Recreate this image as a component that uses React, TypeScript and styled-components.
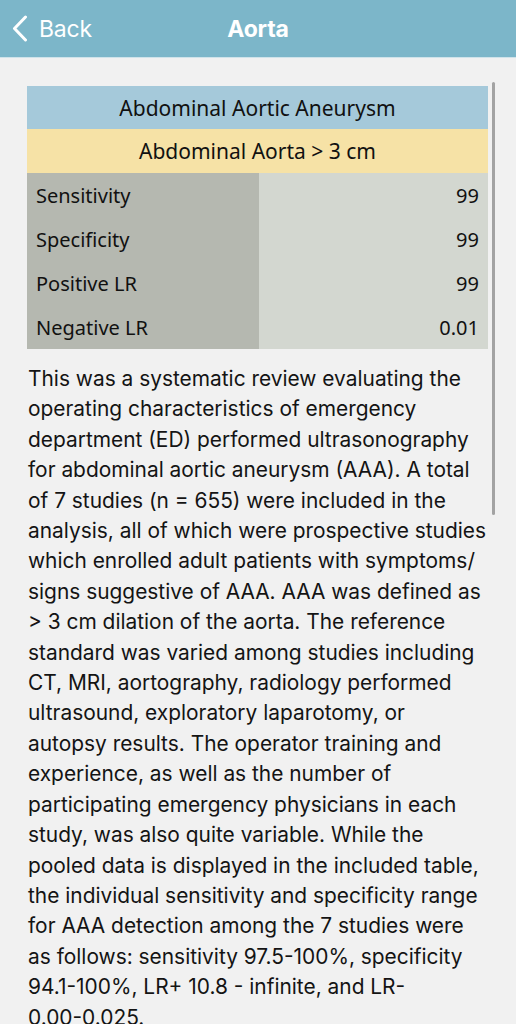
import React from "react";
import styled, { createGlobalStyle } from "styled-components";

const Global = createGlobalStyle`
  html, body { margin: 0; padding: 0; background: #f1f1f1; }
  body { width: 516px; height: 1024px; overflow: hidden; }
`;

const Page = styled.div`
  width: 516px;
  height: 1024px;
  background: #f1f1f1;
  display: flex;
  flex-direction: column;
  overflow: hidden;
  position: relative;
`;

const NavBar = styled.header`
  height: 57px;
  flex-shrink: 0;
  background: #7cb6c9;
  border-bottom: 1px solid #cfe3ea;
  display: grid;
  grid-template-columns: 1fr auto 1fr;
  align-items: center;
  font-family: Inter, "Liberation Sans", sans-serif;
  color: #ffffff;
`;

const BackButton = styled.div`
  display: flex;
  align-items: center;
  gap: 11px;
  padding-left: 12px;
  font-size: 23px;
  font-weight: 400;
  letter-spacing: -0.2px;
`;

const Title = styled.h1`
  margin: 0;
  font-size: 23px;
  font-weight: 700;
  letter-spacing: -0.2px;
`;

const Content = styled.main`
  padding: 28px 28px 0 27px;
  display: flex;
  flex-direction: column;
`;

const Table = styled.div`
  display: grid;
  grid-template-columns: 232px 1fr;
  font-family: "Noto Sans", "Liberation Sans", sans-serif;
  color: #111;
`;

const BandRow = styled.div<{ $bg: string; $h: number }>`
  grid-column: 1 / -1;
  height: ${(p) => p.$h}px;
  background: ${(p) => p.$bg};
  display: flex;
  align-items: center;
  justify-content: center;
  font-size: 21px;
`;

const LabelCell = styled.div`
  height: 44px;
  background: #b5b8b0;
  display: flex;
  align-items: center;
  padding-left: 9px;
  font-size: 20px;
`;

const ValueCell = styled.div`
  height: 44px;
  background: #d3d7d0;
  display: flex;
  align-items: center;
  justify-content: flex-end;
  padding-right: 9px;
  font-size: 20px;
`;

const Paragraph = styled.p`
  margin: 15px 0 0 1px;
  font-family: Inter, "Liberation Sans", sans-serif;
  font-size: 20.9px;
  line-height: 30.4px;
  color: #141414;
  white-space: nowrap;
`;

const ScrollThumb = styled.div`
  position: absolute;
  left: 492px;
  top: 82px;
  width: 3px;
  height: 433px;
  border-radius: 2px;
  background: #a3a3a3;
`;

const rows: [string, string][] = [
  ["Sensitivity", "99"],
  ["Specificity", "99"],
  ["Positive LR", "99"],
  ["Negative LR", "0.01"],
];

const lines = [
  "This was a systematic review evaluating the",
  "operating characteristics of emergency",
  "department (ED) performed ultrasonography",
  "for abdominal aortic aneurysm (AAA). A total",
  "of 7 studies (n = 655) were included in the",
  "analysis, all of which were prospective studies",
  "which enrolled adult patients with symptoms/",
  "signs suggestive of AAA. AAA was defined as",
  "> 3 cm dilation of the aorta. The reference",
  "standard was varied among studies including",
  "CT, MRI, aortography, radiology performed",
  "ultrasound, exploratory laparotomy, or",
  "autopsy results. The operator training and",
  "experience, as well as the number of",
  "participating emergency physicians in each",
  "study, was also quite variable. While the",
  "pooled data is displayed in the included table,",
  "the individual sensitivity and specificity range",
  "for AAA detection among the 7 studies were",
  "as follows: sensitivity 97.5-100%, specificity",
  "94.1-100%, LR+ 10.8 - infinite, and LR-",
  "0.00-0.025.",
];

export default function App() {
  return (
    <Page>
      <Global />
      <NavBar>
        <BackButton>
          <svg width="16" height="27" viewBox="0 0 16 27" fill="none">
            <path d="M13.5 2 L2.5 13.5 L13.5 25" stroke="#fff" strokeWidth="3" strokeLinecap="round" strokeLinejoin="round" />
          </svg>
          <span>Back</span>
        </BackButton>
        <Title>Aorta</Title>
        <div />
      </NavBar>
      <Content>
        <Table>
          <BandRow $bg="#a5c9da" $h={43}>Abdominal Aortic Aneurysm</BandRow>
          <BandRow $bg="#f6e2a6" $h={44}>Abdominal Aorta &gt; 3 cm</BandRow>
          {rows.map(([k, v]) => (
            <React.Fragment key={k}>
              <LabelCell>{k}</LabelCell>
              <ValueCell>{v}</ValueCell>
            </React.Fragment>
          ))}
        </Table>
        <Paragraph>
          {lines.map((l, i) => (
            <React.Fragment key={i}>
              {l}
              {i < lines.length - 1 && <br />}
            </React.Fragment>
          ))}
        </Paragraph>
      </Content>
      <ScrollThumb />
    </Page>
  );
}
